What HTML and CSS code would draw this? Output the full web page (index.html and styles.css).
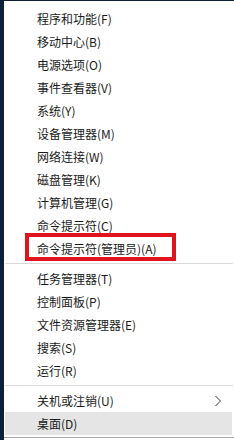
FILE: index.html
```html
<!DOCTYPE html>
<html lang="zh-CN">
<head>
    <meta charset="UTF-8">
    <title>快速链接菜单</title>
    <link rel="stylesheet" href="styles.css">
</head>
<body>
<div class="desktop-edge"></div>
<div class="menu">
    <ul class="menu-group">
        <li class="menu-item">程序和功能(F)</li>
        <li class="menu-item">移动中心(B)</li>
        <li class="menu-item">电源选项(O)</li>
        <li class="menu-item">事件查看器(V)</li>
        <li class="menu-item">系统(Y)</li>
        <li class="menu-item">设备管理器(M)</li>
        <li class="menu-item">网络连接(W)</li>
        <li class="menu-item">磁盘管理(K)</li>
        <li class="menu-item">计算机管理(G)</li>
        <li class="menu-item">命令提示符(C)</li>
        <li class="menu-item marked">命令提示符(管理员)(A)<span class="mark"></span></li>
    </ul>
    <div class="sep"></div>
    <ul class="menu-group">
        <li class="menu-item">任务管理器(T)</li>
        <li class="menu-item">控制面板(P)</li>
        <li class="menu-item">文件资源管理器(E)</li>
        <li class="menu-item">搜索(S)</li>
        <li class="menu-item">运行(R)</li>
    </ul>
    <div class="sep"></div>
    <ul class="menu-group">
        <li class="menu-item">关机或注销(U)
            <svg class="chevron" width="8" height="12" viewBox="0 0 8 12">
                <path d="M1.5 1 L6.5 6 L1.5 11" fill="none" stroke="#333" stroke-width="1"/>
            </svg>
        </li>
        <li class="menu-item active">桌面(D)</li>
    </ul>
    <div class="menu-bottom"></div>
    <div class="menu-rest"></div>
</div>
</body>
</html>
```

FILE: styles.css
```css
html, body {
    margin: 0;
    padding: 0;
}
body {
    width: 234px;
    height: 440px;
    background-color: #0e2036;
    display: flex;
    font-family: "Noto Sans CJK SC", "Noto Sans", sans-serif;
    font-size: 12px;
    color: #1a1a1a;
    overflow: hidden;
}
.desktop-edge {
    width: 4px;
    background-color: #0e2036;
}
.menu {
    flex: 1;
    margin-top: 1px;
    background-color: #ffffff;
    display: flex;
    flex-direction: column;
    padding: 6px 2px 0 1px;
}
.menu-group {
    list-style: none;
    margin: 0;
    padding: 0;
}
.menu-item {
    position: relative;
    height: 23px;
    line-height: 23px;
    padding-left: 32px;
    white-space: nowrap;
}
.menu-item.active {
    background-color: #e5e5e5;
}
.mark {
    position: absolute;
    left: 20px;
    top: -4px;
    width: 151px;
    height: 28px;
    box-sizing: border-box;
    border: 4px solid #e0141c;
}
.chevron {
    position: absolute;
    right: 10px;
    top: 6px;
}
.sep {
    height: 1px;
    margin: 3px -1px 3px 0;
    background-color: #d9d9d9;
}
.menu-bottom {
    margin-top: 2px;
    height: 1px;
    margin-right: -2px;
    margin-left: -1px;
    background-color: #a6a6a6;
}
.menu-rest {
    flex: 1;
}
```
